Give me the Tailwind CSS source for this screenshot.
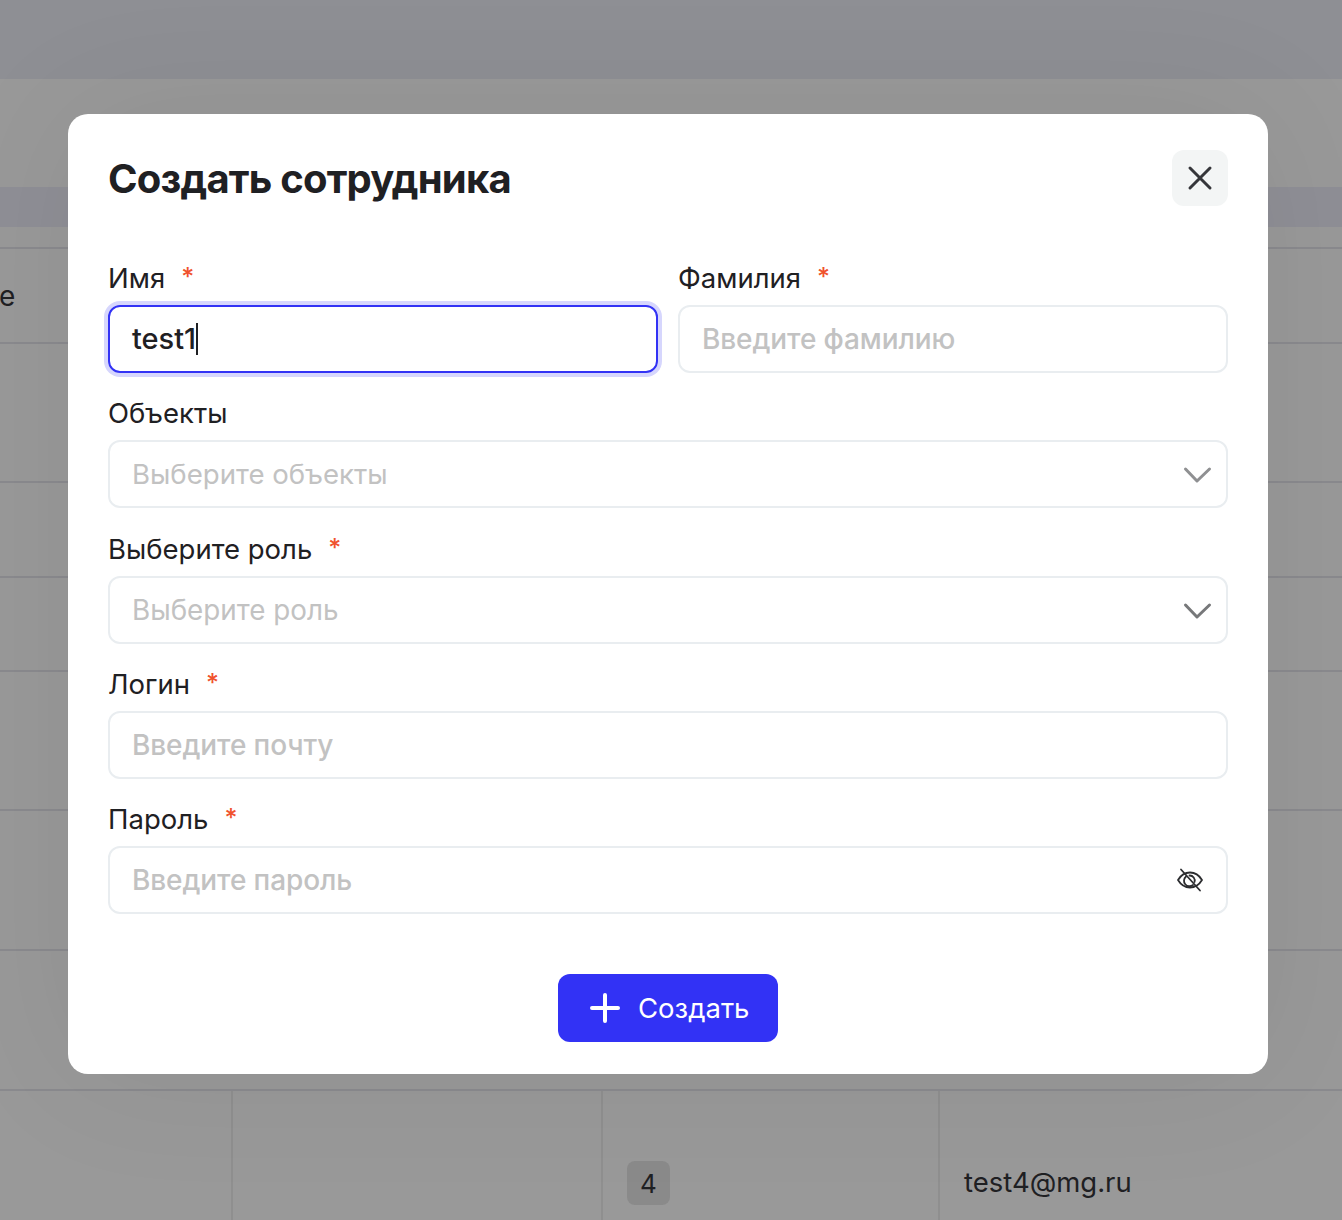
<!DOCTYPE html>
<html lang="ru">
<head>
    <meta charset="UTF-8">
    <title>Создать сотрудника</title>
    <script src="https://cdn.jsdelivr.net/npm/@tailwindcss/browser@4"></script>
</head>
<body class="font-['Inter',sans-serif] bg-[#999999] h-[1220px] overflow-hidden relative">

    <!-- Page behind the dialog -->
    <div class="h-[79px] bg-[#8e8f94]"></div>
    <div class="h-[108px] bg-[#999999]"></div>
    <div class="h-[40px] bg-[#8f8f96]"></div>
    <div class="h-[22px] border-b-2 border-[#8a8a8e]"></div>
    <div class="h-[95px] border-b-2 border-[#8a8a8e] flex items-center text-[28px] text-[#1f2023] leading-none"><span class="-ml-[1px]">e</span></div>
    <div class="h-[139px] border-b-2 border-[#8a8a8e]"></div>
    <div class="h-[95px] border-b-2 border-[#8a8a8e]"></div>
    <div class="h-[94px] border-b-2 border-[#8a8a8e]"></div>
    <div class="h-[139px] border-b-2 border-[#8a8a8e]"></div>
    <div class="h-[140px] border-b-2 border-[#8a8a8e]"></div>
    <div class="h-[140px] border-b-2 border-[#8a8a8e]"></div>
    <div class="grid grid-cols-[233px_370px_337px_1fr] h-[129px] text-[27.5px] text-[#1f2023]">
        <div class="border-r-2 border-[#8f8f8f]"></div>
        <div class="border-r-2 border-[#8f8f8f]"></div>
        <div class="border-r-2 border-[#8f8f8f] pl-[24px] pt-[70px]">
            <span class="inline-flex w-[43px] h-[44px] items-center justify-center rounded-lg bg-[#8a8a8a] text-[26px]">4</span>
        </div>
        <div class="pl-[24px] pt-[72px] leading-[38px]">test4@mg.ru</div>
    </div>

    <!-- Dialog -->
    <div class="absolute left-[68px] top-[114px] w-[1200px] h-[960px] bg-white rounded-[20px] px-[40px] pt-[36px] shadow-[0_0_140px_rgba(0,0,0,0.07)]">
        <div class="flex items-start justify-between h-[56px]">
            <h1 class="text-[40px] font-bold leading-[58px] tracking-[-0.8px] text-[#1f2023]">Создать сотрудника</h1>
            <button class="w-[56px] h-[56px] rounded-[12px] bg-[#f3f5f5] flex items-center justify-center">
                <svg width="28" height="28" viewBox="0 0 28 28" fill="none" stroke="#35363a" stroke-width="3" stroke-linecap="round"><path d="M4 4l20 20M24 4L4 24"/></svg>
            </button>
        </div>

        <div class="grid grid-cols-2 gap-x-[20px] mt-[56px]">
            <div>
                <label class="flex h-[32px] mb-[11px] text-[27.5px] leading-[32px] text-[#1f2023]">Имя<span class="text-[#f0522d] ml-[16px] mt-[3px] font-medium text-[25px] leading-[24px]">*</span></label>
                <div class="h-[68px] rounded-[12px] border-2 border-[#3232f5] ring-4 ring-[#d6d6fd] px-[22px] flex items-center text-[29px] font-medium text-[#1f2023]">test1<span class="w-[2px] h-[32px] bg-[#1f2023]"></span></div>
            </div>
            <div>
                <label class="flex h-[32px] mb-[11px] text-[27.5px] leading-[32px] text-[#1f2023]">Фамилия<span class="text-[#f0522d] ml-[16px] mt-[3px] font-medium text-[25px] leading-[24px]">*</span></label>
                <div class="h-[68px] rounded-[12px] border-2 border-[#e9edf0] px-[22px] flex items-center text-[28px] font-medium tracking-[-0.1px] text-[#c2c2c2]">Введите фамилию</div>
            </div>
        </div>

        <div class="flex flex-col gap-[24px] mt-[24px]">
            <div>
                <label class="flex h-[32px] mb-[11px] text-[27.5px] leading-[32px] text-[#1f2023]">Объекты</label>
                <div class="h-[68px] rounded-[12px] border-2 border-[#e9edf0] pl-[22px] pr-[14px] flex items-center justify-between text-[27.6px] text-[#c2c2c2]">
                    <span class="pt-[2px]">Выберите объекты</span>
                    <svg class="mt-[2px]" width="30" height="18" viewBox="0 0 30 18" fill="none" stroke="#8f9092" stroke-width="3" stroke-linecap="round" stroke-linejoin="round"><path d="M3.500 3L15 15L27.500 3"/></svg>
                </div>
            </div>
            <div class="mt-[1px]">
                <label class="flex h-[32px] mb-[11px] text-[27.5px] leading-[32px] text-[#1f2023]">Выберите роль<span class="text-[#f0522d] ml-[16px] mt-[3px] font-medium text-[25px] leading-[24px]">*</span></label>
                <div class="h-[68px] rounded-[12px] border-2 border-[#e9edf0] pl-[22px] pr-[14px] flex items-center justify-between text-[27.8px] text-[#c2c2c2]">
                    <span class="pt-[2px]">Выберите роль</span>
                    <svg class="mt-[2px]" width="30" height="18" viewBox="0 0 30 18" fill="none" stroke="#77787a" stroke-width="3" stroke-linecap="round" stroke-linejoin="round"><path d="M3.500 3L15 15L27.500 3"/></svg>
                </div>
            </div>
            <div>
                <label class="flex h-[32px] mb-[11px] text-[27.5px] leading-[32px] text-[#1f2023]">Логин<span class="text-[#f0522d] ml-[16px] mt-[3px] font-medium text-[25px] leading-[24px]">*</span></label>
                <div class="h-[68px] rounded-[12px] border-2 border-[#e9edf0] px-[22px] flex items-center text-[28px] font-medium tracking-[-0.1px] text-[#c2c2c2]">Введите почту</div>
            </div>
            <div>
                <label class="flex h-[32px] mb-[11px] text-[27.5px] leading-[32px] text-[#1f2023]">Пароль<span class="text-[#f0522d] ml-[16px] mt-[3px] font-medium text-[25px] leading-[24px]">*</span></label>
                <div class="h-[68px] rounded-[12px] border-2 border-[#e9edf0] pl-[22px] pr-[22px] flex items-center justify-between text-[28px] font-medium tracking-[-0.1px] text-[#c2c2c2]">
                    Введите пароль
                    <svg width="28" height="24" viewBox="0 0 28 24" fill="none" stroke="#2c2d30" stroke-width="1.800" stroke-linecap="round" stroke-linejoin="round">
                        <path d="M2 12c3-5 7-7.500 12-7.500S23 7 26 12c-3 5-7 7.500-12 7.500S5 17 2 12z"/>
                        <path d="M10 8.500a5 5 0 0 0 7 8.500M18.500 14a5 5 0 0 0-5-6.500"/>
                        <path d="M5 1.500l19 21"/>
                    </svg>
                </div>
            </div>
        </div>

        <div class="flex justify-center mt-[60px]">
            <button class="w-[220px] h-[68px] rounded-[12px] bg-[#3232f5] text-white text-[27.5px] flex items-center pl-[32px] gap-[18px]">
                <svg width="30" height="30" viewBox="0 0 30 30" fill="none" stroke="white" stroke-width="4" stroke-linecap="round"><path d="M15 2v26M2 15h26"/></svg>
                <span class="pt-[2px]">Создать</span>
            </button>
        </div>
    </div>
</body>
</html>
